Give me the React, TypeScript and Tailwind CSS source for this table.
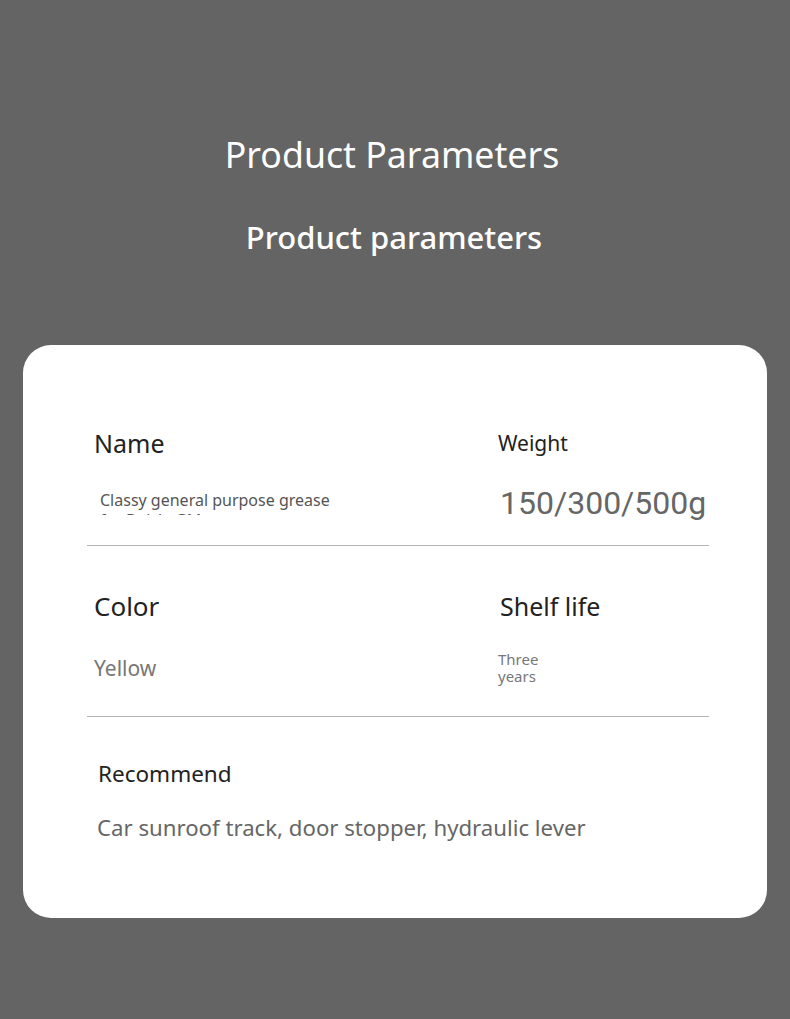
export default function App() {
  return (
    <div
      className="w-[790px] h-[1019px] bg-[#646464] overflow-hidden"
      style={{ fontFamily: '"Noto Sans", "Open Sans", sans-serif' }}
    >
      <div className="pt-[129px] flex flex-col items-center text-white">
        <h1 className="mr-[6px] text-[35.7px] leading-[50px] font-normal">Product Parameters</h1>
        <h2 className="mt-[36px] mr-[2px] text-[31px] leading-[44px] font-medium">Product parameters</h2>
      </div>

      <div className="mt-[86px] mx-[23px] h-[573px] bg-white rounded-[28px] pl-[64px] pr-[58px] pt-[80px]">
        {/* Row 1 */}
        <div className="flex border-b border-[#b4b4b4] h-[121px]">
          <div className="w-[411px] pl-[7px]">
            <div className="text-[25px] leading-[36px] text-[#222]">Name</div>
            <div className="mt-[26px] ml-[6px] w-[240px] h-[28px] overflow-hidden text-[16px] leading-[20px] text-[#555] pt-[3px]">
              Classy general purpose grease for Buick, GM
            </div>
          </div>
          <div className="flex-1">
            <div className="text-[21px] leading-[36px] text-[#222]">Weight</div>
            <div
              className="mt-[22px] ml-[2px] text-[32px] leading-[40px] text-[#666]"
              style={{ fontFamily: 'Roboto, sans-serif' }}
            >
              150/300/500g
            </div>
          </div>
        </div>

        {/* Row 2 */}
        <div className="flex border-b border-[#b4b4b4] h-[171px] pt-[42px]">
          <div className="w-[413px] pl-[7px]">
            <div className="text-[26px] leading-[36px] text-[#222]">Color</div>
            <div className="mt-[30px] text-[21px] leading-[28px] text-[#777]">Yellow</div>
          </div>
          <div className="flex-1">
            <div className="text-[25px] leading-[36px] text-[#222]">Shelf life</div>
            <div className="mt-[27px] ml-[-2px] w-[50px] text-[15px] leading-[17px] text-[#777]">Three years</div>
          </div>
        </div>

        {/* Row 3 */}
        <div className="pt-[41px] pl-[11px]">
          <div className="text-[22.5px] leading-[32px] text-[#222]">Recommend</div>
          <div className="mt-[22px] ml-[-1px] text-[22.2px] leading-[32px] text-[#666]">
            Car sunroof track, door stopper, hydraulic lever
          </div>
        </div>
      </div>
    </div>
  );
}
